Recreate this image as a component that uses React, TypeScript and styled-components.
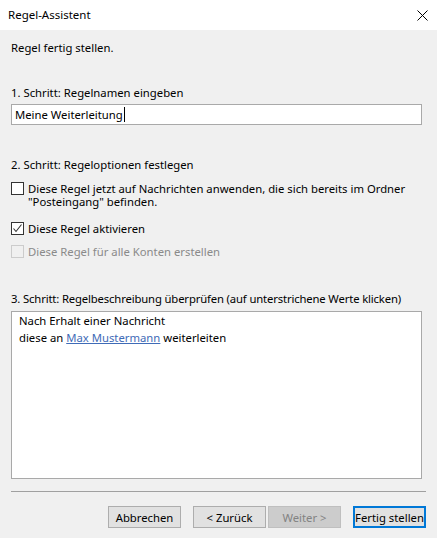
import React from "react";
import styled, { createGlobalStyle } from "styled-components";

const Global = createGlobalStyle`
  html, body { margin: 0; padding: 0; background: #f0f0f0; }
  body { font-family: "Noto Sans", "Open Sans", sans-serif; font-size: 11.3px; color: #000; }
  * { box-sizing: border-box; }
`;

const Window = styled.div`
  width: 437px;
  height: 538px;
  display: flex;
  flex-direction: column;
  background: #f0f0f0;
  overflow: hidden;
  white-space: nowrap;
`;

const TitleBar = styled.div`
  height: 30px;
  flex: none;
  background: #fff;
  display: flex;
  align-items: center;
  justify-content: space-between;
  padding: 0 9px 0 8px;
`;

const TitleText = styled.span`
  font-size: 11.5px;
  line-height: 16px;
`;

const CloseBtn = styled.button`
  width: 12px;
  height: 12px;
  padding: 0;
  border: none;
  background: transparent;
  display: flex;
  align-items: center;
  justify-content: center;
`;

const Content = styled.div`
  flex: 1;
  display: flex;
  flex-direction: column;
  padding: 10px 11px 0 11px;
`;

const Heading = styled.div`
  line-height: 16px;
  height: 16px;
`;

const StepLabel = styled.div<{ $top: number; $tight?: boolean }>`
  line-height: 16px;
  height: 16px;
  margin-top: ${(p) => p.$top}px;
  letter-spacing: ${(p) => (p.$tight ? "-0.15px" : "0")};
`;

const TextInput = styled.div`
  margin-top: 3px;
  width: 411px;
  height: 21px;
  background: #fff;
  border: 1px solid #a9a9a9;
  display: flex;
  align-items: center;
  padding-left: 3px;
  line-height: 16px;
`;

const Caret = styled.span`
  display: inline-block;
  width: 1px;
  height: 15px;
  background: #000;
  margin-left: 1px;
  vertical-align: middle;
`;

const OptionRow = styled.div<{ $top: number; $disabled?: boolean }>`
  display: flex;
  align-items: flex-start;
  gap: 4px;
  margin-top: ${(p) => p.$top}px;
  color: ${(p) => (p.$disabled ? "#8a8a8a" : "#000")};
`;

const Box = styled.span<{ $disabled?: boolean }>`
  flex: none;
  width: 13px;
  height: 13px;
  margin-top: 2px;
  border: 1px solid ${(p) => (p.$disabled ? "#cccccc" : "#333333")};
  background: ${(p) => (p.$disabled ? "transparent" : "#fff")};
  display: flex;
  align-items: center;
  justify-content: center;
`;

const OptionText = styled.span`
  line-height: 13px;
  padding-top: 2px;
`;

const DescBox = styled.div`
  margin-top: 4px;
  width: 411px;
  height: 168px;
  background: #fff;
  border: 1px solid #a9a9a9;
  padding: 1px 7px;
  line-height: 16.5px;
`;

const Link = styled.a`
  color: #3f6bb7;
  text-decoration: underline;
  cursor: pointer;
`;

const Separator = styled.div`
  margin-top: 12px;
  width: 415px;
  height: 1px;
  background: #a0a0a0;
`;

const ButtonRow = styled.div`
  margin-top: 14px;
  display: flex;
  justify-content: flex-end;
  width: 415px;
`;

const Btn = styled.button<{ $ml: number; $primary?: boolean }>`
  width: 73px;
  height: 22px;
  margin-left: ${(p) => p.$ml}px;
  font-family: inherit;
  font-size: 11.3px;
  white-space: nowrap;
  padding: 0;
  background: #e1e1e1;
  color: #000;
  border: ${(p) => (p.$primary ? "2px solid #0078d7" : "1px solid #adadad")};
  &:disabled {
    background: #cccccc;
    border-color: #bfbfbf;
    color: #838383;
  }
`;

export default function App() {
  return (
    <Window>
      <Global />
      <TitleBar>
        <TitleText>Regel-Assistent</TitleText>
        <CloseBtn aria-label="Schließen">
          <svg width="11" height="11" viewBox="0 0 11 11">
            <path d="M0.5 0.5 L10.5 10.5 M10.5 0.5 L0.5 10.5" stroke="#000" strokeWidth="1" fill="none" />
          </svg>
        </CloseBtn>
      </TitleBar>
      <Content>
        <Heading>Regel fertig stellen.</Heading>
        <StepLabel $top={29}>1. Schritt: Regelnamen eingeben</StepLabel>
        <TextInput>
          <span>Meine Weiterleitung</span>
          <Caret />
        </TextInput>
        <StepLabel $top={32}>2. Schritt: Regeloptionen festlegen</StepLabel>
        <OptionRow $top={7}>
          <Box />
          <OptionText>
            Diese Regel jetzt auf Nachrichten anwenden, die sich bereits im Ordner
            <br />
            "Posteingang" befinden.
          </OptionText>
        </OptionRow>
        <OptionRow $top={12}>
          <Box>
            <svg width="11" height="11" viewBox="0 0 11 11">
              <path d="M1.5 5.5 L4 8.5 L9.5 1.5" stroke="#333" strokeWidth="1.1" fill="none" />
            </svg>
          </Box>
          <OptionText>Diese Regel aktivieren</OptionText>
        </OptionRow>
        <OptionRow $top={8} $disabled>
          <Box $disabled />
          <OptionText>Diese Regel für alle Konten erstellen</OptionText>
        </OptionRow>
        <StepLabel $top={33} $tight>
          3. Schritt: Regelbeschreibung überprüfen (auf unterstrichene Werte klicken)
        </StepLabel>
        <DescBox>
          Nach Erhalt einer Nachricht
          <br />
          diese an <Link>Max Mustermann</Link> weiterleiten
        </DescBox>
        <Separator />
        <ButtonRow>
          <Btn $ml={0}>Abbrechen</Btn>
          <Btn $ml={12}>&lt; Zurück</Btn>
          <Btn $ml={2} disabled>Weiter &gt;</Btn>
          <Btn $ml={12} $primary>Fertig stellen</Btn>
        </ButtonRow>
      </Content>
    </Window>
  );
}
